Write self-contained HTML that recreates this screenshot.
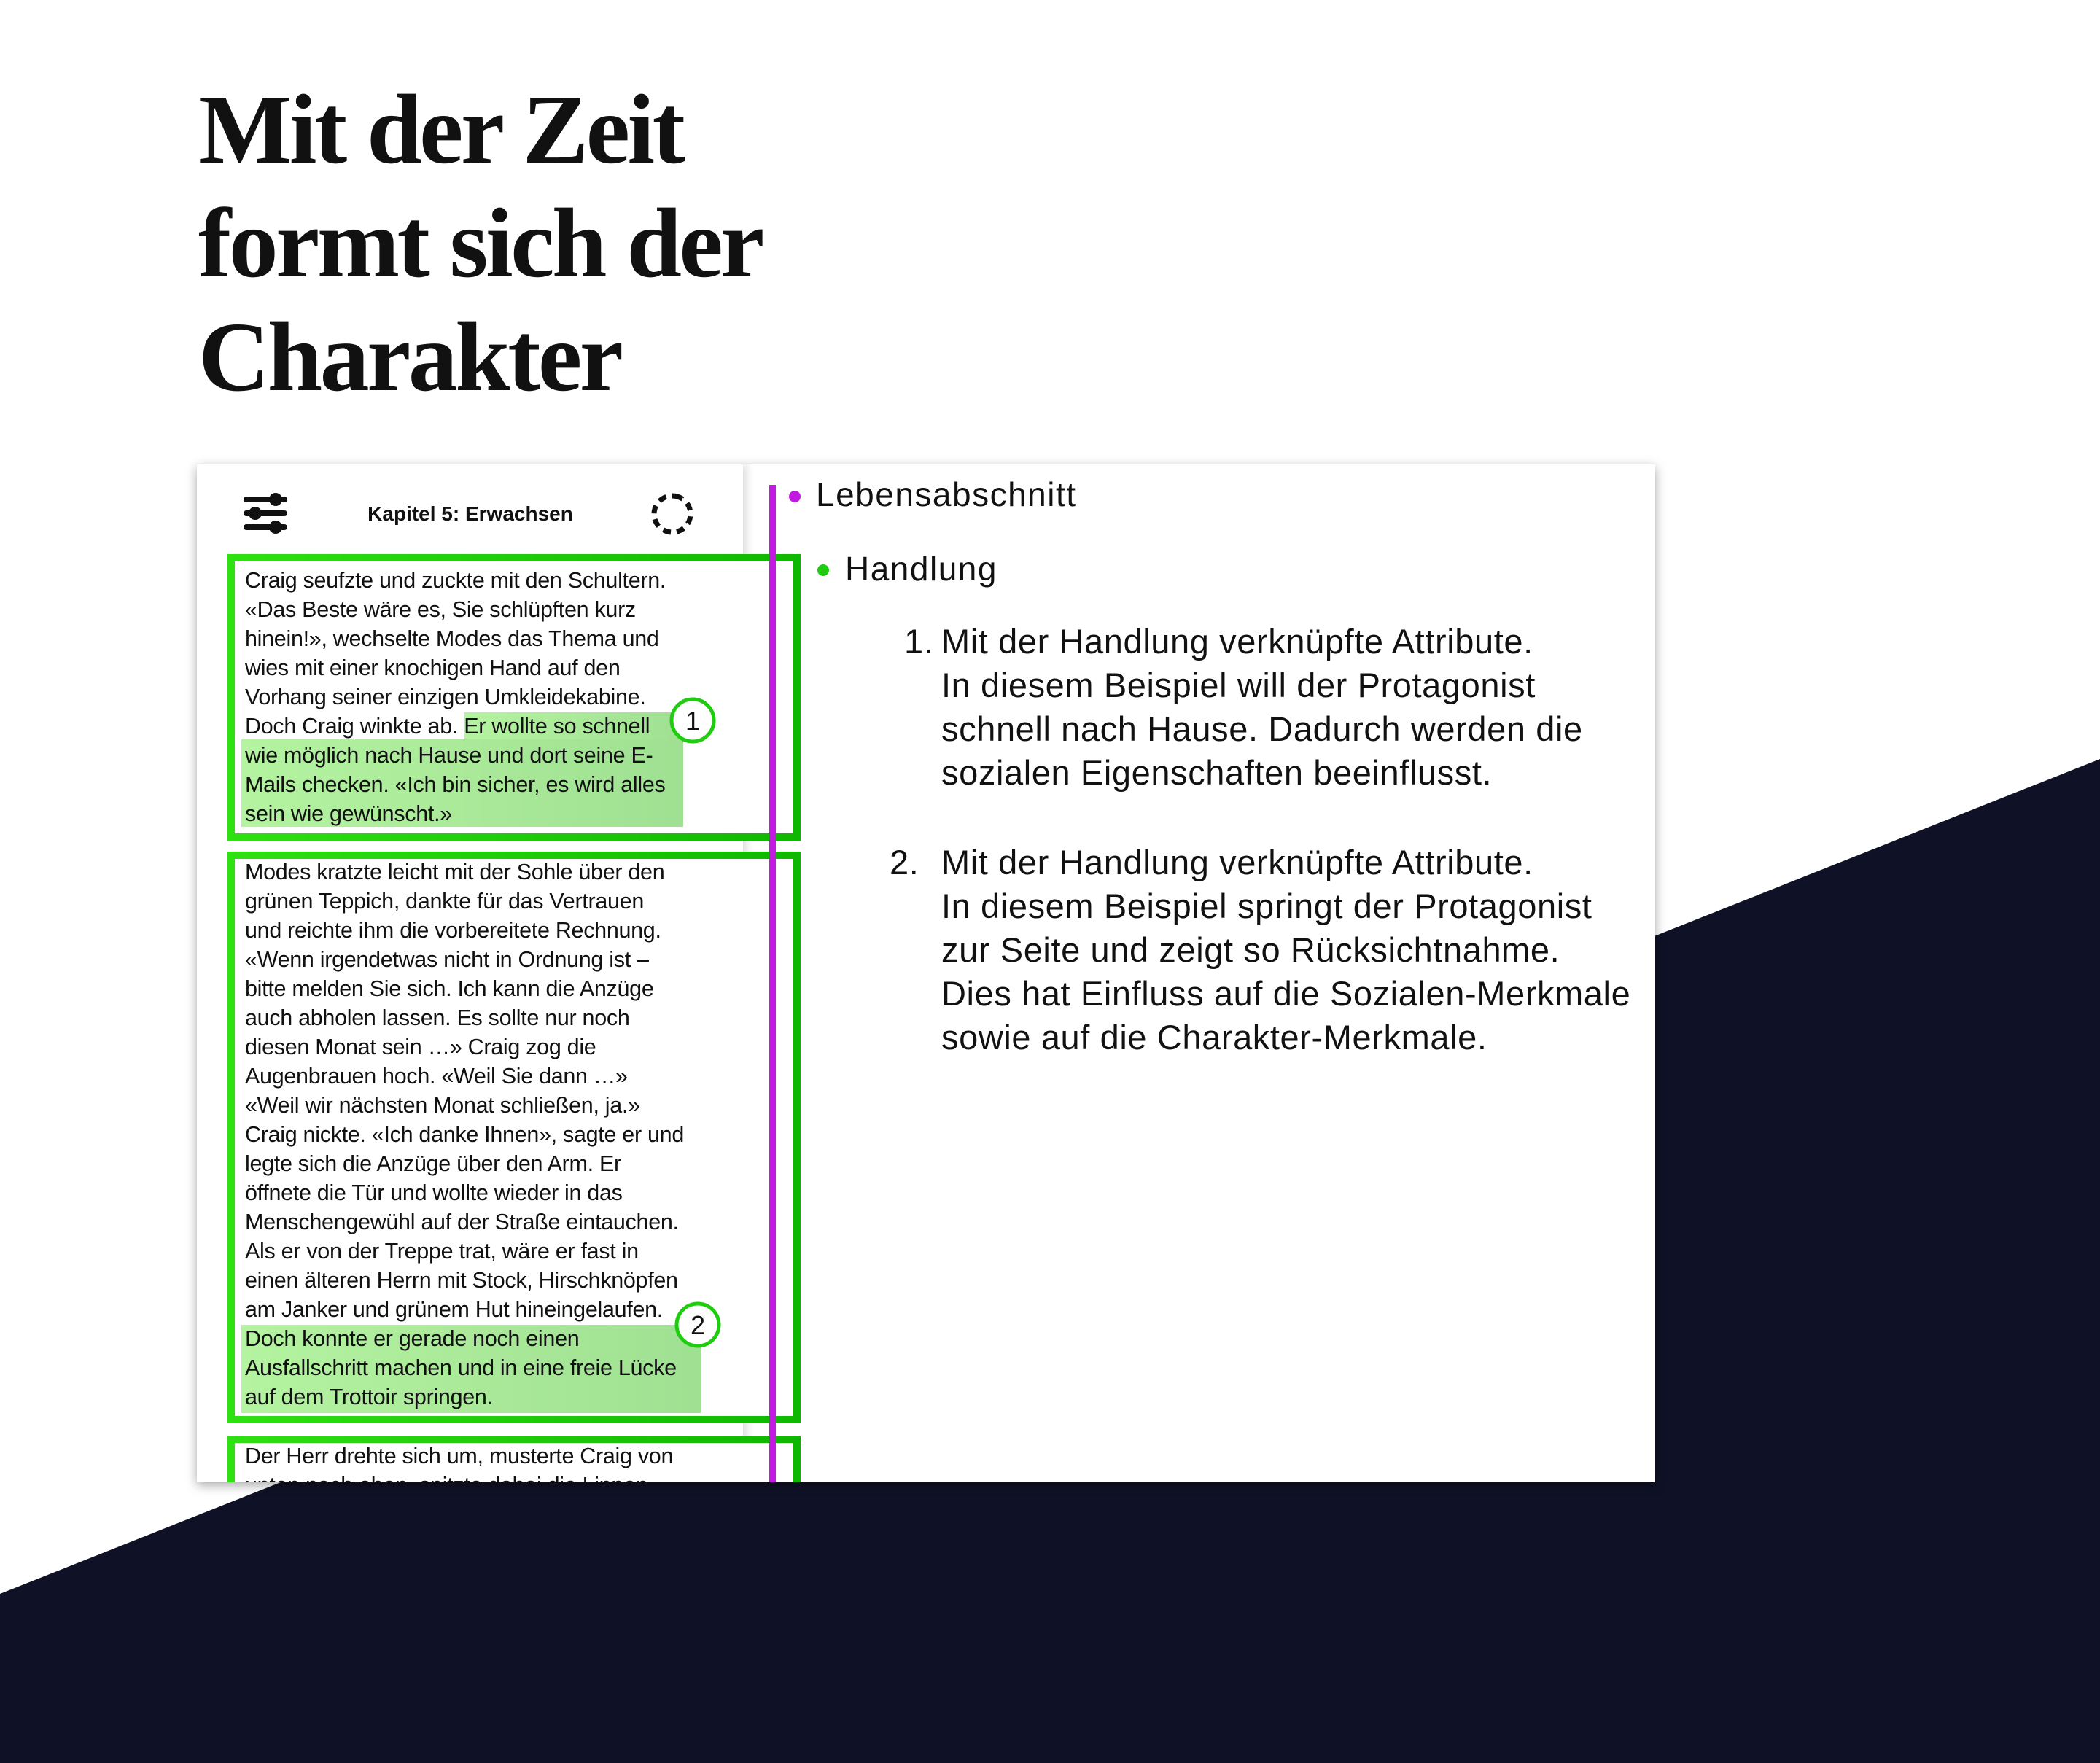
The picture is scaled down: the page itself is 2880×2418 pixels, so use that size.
<!DOCTYPE html>
<html><head><meta charset="utf-8"><style>
*{margin:0;padding:0;box-sizing:border-box}
body{width:2880px;height:2418px;background:#fff;position:relative;overflow:hidden;font-family:"Liberation Sans",sans-serif;color:#111}
.abs{position:absolute}
h1{position:absolute;left:272px;top:100px;font-family:"Liberation Serif",serif;font-weight:bold;font-size:136px;line-height:156px;color:#111;letter-spacing:-3.6px}
.card{position:absolute;left:270px;top:637px;width:2000px;height:1396px;background:#fff;box-shadow:0 4px 14px rgba(0,0,0,.35);overflow:hidden}
.pane{position:absolute;left:0;top:0;width:749px;height:1396px;background:#fff;box-shadow:6px 0 10px rgba(0,0,0,.12)}
.gbox{position:absolute;border:10px solid transparent;background:linear-gradient(#fff,#fff) padding-box,linear-gradient(90deg,#2fe012,#0fb800) border-box}
.txt{position:absolute;left:66px;font-size:30.5px;line-height:40px;white-space:nowrap;color:#111;letter-spacing:-0.3px}
.hl{position:absolute;background:linear-gradient(90deg,#b4f3a0,#9fe092)}
.r{position:absolute;font-size:47px;line-height:60px;white-space:nowrap;color:#111;letter-spacing:0.6px}
</style></head><body>
<svg class="abs" style="left:0;top:0" width="2880" height="2418"><polygon points="0,2186 2880,1041 2880,2418 0,2418" fill="#0f1126"/></svg>
<h1>Mit der Zeit<br>formt sich der<br>Charakter</h1>
<div class="card">
 <div class="pane"></div>
 <svg class="abs" style="left:62px;top:36px" width="64" height="64" viewBox="0 0 64 64">
  <g stroke="#111" stroke-width="8" stroke-linecap="round"><line x1="6" y1="12" x2="58" y2="12"/><line x1="6" y1="31" x2="58" y2="31"/><line x1="6" y1="50" x2="58" y2="50"/></g>
  <g fill="#111"><circle cx="46" cy="12" r="9"/><circle cx="18" cy="31" r="9"/><circle cx="46" cy="50" r="9"/></g>
 </svg>
 <div class="abs" style="left:200px;top:50px;width:350px;text-align:center;font-weight:bold;font-size:28px;line-height:36px">Kapitel 5: Erwachsen</div>
 <svg class="abs" style="left:620px;top:36px" width="64" height="64" viewBox="0 0 64 64">
  <circle cx="32" cy="32" r="25" fill="none" stroke="#111" stroke-width="7" stroke-dasharray="11 8" transform="rotate(-80 32 32)"/>
  <circle cx="32" cy="32" r="25" fill="none" stroke="#fff" stroke-width="3" stroke-dasharray="0 10 9 10 9 10 9 100" transform="rotate(-80 32 32)"/>
 </svg>
 <div class="gbox" style="left:42px;top:123px;width:786px;height:393px"></div>
 <div class="hl" style="left:367px;top:340px;width:300px;height:40px"></div>
 <div class="hl" style="left:61px;top:377px;width:606px;height:120px"></div>
 <div class="txt" style="top:139px">Craig seufzte und zuckte mit den Schultern.<br>«Das Beste wäre es, Sie schlüpften kurz<br>hinein!», wechselte Modes das Thema und<br>wies mit einer knochigen Hand auf den<br>Vorhang seiner einzigen Umkleidekabine.<br>Doch Craig winkte ab. Er wollte so schnell<br>wie möglich nach Hause und dort seine E-<br>Mails checken. «Ich bin sicher, es wird alles<br>sein wie gewünscht.»</div>
 <svg class="abs" style="left:646px;top:317px" width="68" height="68"><circle cx="34" cy="34" r="29" fill="#fff" stroke="#1fcc10" stroke-width="5"/><text x="34" y="47" text-anchor="middle" font-family="Liberation Sans" font-size="36" fill="#111">1</text></svg>
 <div class="gbox" style="left:42px;top:531px;width:786px;height:784px"></div>
 <div class="hl" style="left:61px;top:1180px;width:630px;height:121px"></div>
 <div class="txt" style="top:539px">Modes kratzte leicht mit der Sohle über den<br>grünen Teppich, dankte für das Vertrauen<br>und reichte ihm die vorbereitete Rechnung.<br>«Wenn irgendetwas nicht in Ordnung ist –<br>bitte melden Sie sich. Ich kann die Anzüge<br>auch abholen lassen. Es sollte nur noch<br>diesen Monat sein …» Craig zog die<br>Augenbrauen hoch. «Weil Sie dann …»<br>«Weil wir nächsten Monat schließen, ja.»<br>Craig nickte. «Ich danke Ihnen», sagte er und<br>legte sich die Anzüge über den Arm. Er<br>öffnete die Tür und wollte wieder in das<br>Menschengewühl auf der Straße eintauchen.<br>Als er von der Treppe trat, wäre er fast in<br>einen älteren Herrn mit Stock, Hirschknöpfen<br>am Janker und grünem Hut hineingelaufen.<br>Doch konnte er gerade noch einen<br>Ausfallschritt machen und in eine freie Lücke<br>auf dem Trottoir springen.</div>
 <svg class="abs" style="left:653px;top:1146px" width="68" height="68"><circle cx="34" cy="34" r="29" fill="#fff" stroke="#1fcc10" stroke-width="5"/><text x="34" y="47" text-anchor="middle" font-family="Liberation Sans" font-size="36" fill="#111">2</text></svg>
 <div class="gbox" style="left:42px;top:1332px;width:786px;height:200px"></div>
 <div class="txt" style="top:1340px">Der Herr drehte sich um, musterte Craig von<br>unten nach oben, spitzte dabei die Lippen</div>
 <div class="abs" style="left:785px;top:28px;width:9px;height:1400px;background:#c21ae0"></div>
 <div class="abs" style="left:812px;top:36px;width:16px;height:16px;border-radius:50%;background:#c21ae0"></div>
 <div class="r" style="left:849px;top:11px;font-size:46px;letter-spacing:1.5px">Lebensabschnitt</div>
 <div class="abs" style="left:851px;top:137px;width:16px;height:16px;border-radius:50%;background:#1fcc10"></div>
 <div class="r" style="left:889px;top:113px;font-size:46px;letter-spacing:1.5px">Handlung</div>
 <div class="r" style="left:970px;top:213px">1.</div>
 <div class="r" style="left:1021px;top:213px">Mit der Handlung verknüpfte Attribute.<br>In diesem Beispiel will der Protagonist<br>schnell nach Hause. Dadurch werden die<br>sozialen Eigenschaften beeinflusst.</div>
 <div class="r" style="left:950px;top:516px">2.</div>
 <div class="r" style="left:1021px;top:516px">Mit der Handlung verknüpfte Attribute.<br>In diesem Beispiel springt der Protagonist<br>zur Seite und zeigt so Rücksichtnahme.<br>Dies hat Einfluss auf die Sozialen-Merkmale<br>sowie auf die Charakter-Merkmale.</div>
</div>
</body></html>
